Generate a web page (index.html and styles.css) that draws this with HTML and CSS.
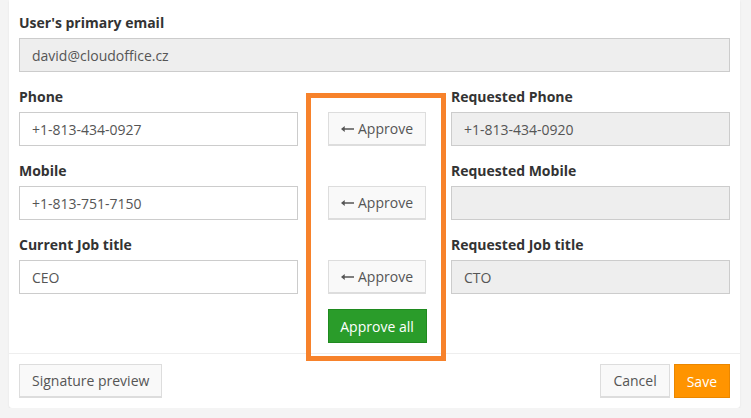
FILE: index.html
```html
<!DOCTYPE html>
<html lang="en">

<head>
    <meta charset="UTF-8">
    <meta name="viewport" content="width=device-width, initial-scale=1.0">
    <title>Profile change request</title>
    <link rel="stylesheet" href="styles.css">
</head>

<body>
    <div class="panel">
        <div class="panel-body">
            <div class="form-group">
                <label for="email">User's primary email</label>
                <input id="email" type="text" value="david@cloudoffice.cz" readonly />
            </div>

            <div class="compare">
                <div class="col">
                    <div class="form-group">
                        <label for="phone">Phone</label>
                        <input id="phone" type="text" value="+1-813-434-0927" />
                    </div>
                    <div class="form-group">
                        <label for="mobile">Mobile</label>
                        <input id="mobile" type="text" value="+1-813-751-7150" />
                    </div>
                    <div class="form-group">
                        <label for="job">Current Job title</label>
                        <input id="job" type="text" value="CEO" />
                    </div>
                </div>

                <div class="col actions">
                    <button type="button" class="btn btn-approve"><svg class="arrow" width="14" height="8" viewBox="0 0 14 8"><path d="M0 4 L4 0.8 L4 3.3 L14 3.3 L14 4.7 L4 4.7 L4 7.2 Z" fill="#555"/></svg>Approve</button>
                    <button type="button" class="btn btn-approve"><svg class="arrow" width="14" height="8" viewBox="0 0 14 8"><path d="M0 4 L4 0.8 L4 3.3 L14 3.3 L14 4.7 L4 4.7 L4 7.2 Z" fill="#555"/></svg>Approve</button>
                    <button type="button" class="btn btn-approve"><svg class="arrow" width="14" height="8" viewBox="0 0 14 8"><path d="M0 4 L4 0.8 L4 3.3 L14 3.3 L14 4.7 L4 4.7 L4 7.2 Z" fill="#555"/></svg>Approve</button>
                    <button type="button" class="btn btn-success">Approve all</button>
                </div>

                <div class="col">
                    <div class="form-group">
                        <label for="reqPhone">Requested Phone</label>
                        <input id="reqPhone" type="text" value="+1-813-434-0920" readonly />
                    </div>
                    <div class="form-group">
                        <label for="reqMobile">Requested Mobile</label>
                        <input id="reqMobile" type="text" value="" readonly />
                    </div>
                    <div class="form-group">
                        <label for="reqJob">Requested Job title</label>
                        <input id="reqJob" type="text" value="CTO" readonly />
                    </div>
                </div>

                <!-- highlight round the approve buttons -->
                <div class="highlight"></div>
            </div>
        </div>

        <div class="panel-footer">
            <button type="button" class="btn">Signature preview</button>
            <div class="footer-right">
                <button type="button" class="btn">Cancel</button>
                <button type="button" class="btn btn-save">Save</button>
            </div>
        </div>
    </div>
</body>

</html>
```

FILE: styles.css
```css
body {
    font-family: 'Open Sans', 'Liberation Sans', sans-serif;
    font-size: 14px;
    background-color: #f4f4f4;
    margin: 0;
    padding: 0 11px 0 9px;
    color: #555;
}

.panel {
    width: 731px;
    background-color: #fff;
    border-radius: 0 0 3px 3px;
    box-shadow: 0 1px 2px rgba(0, 0, 0, 0.08);
}

.panel-body {
    padding: 13px 10px 10px 10px;
}

.form-group {
    margin-bottom: 15px;
}

label {
    display: block;
    font-weight: bold;
    line-height: 20px;
    margin-bottom: 5px;
    color: #333;
}

input {
    display: block;
    width: 100%;
    height: 34px;
    box-sizing: border-box;
    padding: 0 12px;
    border: 1px solid #ccc;
    font-family: inherit;
    font-size: 14px;
    color: #555;
    background-color: #fff;
}

input[readonly] {
    background-color: #eee;
}

.compare {
    position: relative;
    display: grid;
    grid-template-columns: 279px 1fr 279px;
}

.compare .col:last-of-type .form-group:last-child,
.compare .col:first-child .form-group:last-child {
    margin-bottom: 0;
}

.actions {
    display: flex;
    flex-direction: column;
    align-items: center;
    padding: 25px 0 0 5px;
    gap: 40px;
}

.actions .btn-success {
    margin-top: -25px;
}

.btn {
    height: 34px;
    box-sizing: border-box;
    padding: 0 12px;
    border: 1px solid #ddd;
    border-bottom: 2px solid #ddd;
    background-color: #f9f9f9;
    font-family: inherit;
    font-size: 14px;
    color: #555;
    white-space: nowrap;
    cursor: pointer;
}

.btn-approve {
    width: 98px;
    display: flex;
    align-items: center;
    justify-content: center;
    gap: 4px;
}

.btn-success {
    width: 99px;
    padding: 0 6px;
    background-color: #2a9c2a;
    border: 1px solid #1f8a1f;
    color: #fff;
}

.btn-save {
    background-color: #ff9400;
    border: 1px solid #ea8700;
    color: #fff;
}

.highlight {
    position: absolute;
    left: 287px;
    top: 6px;
    width: 130px;
    height: 258px;
    border: 5px solid #f7822b;
    pointer-events: none;
}

.panel-footer {
    display: flex;
    justify-content: space-between;
    border-top: 1px solid #eee;
    padding: 10px 10px 10px 10px;
}

.footer-right {
    display: flex;
    gap: 4px;
}
```
